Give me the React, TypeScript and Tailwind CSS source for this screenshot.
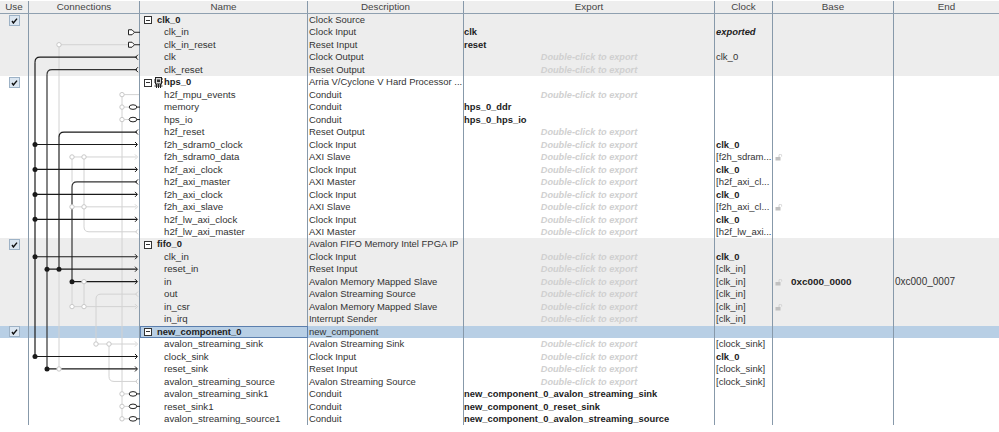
import React from "react";

type Row = {
  name: string;
  desc: string;
  kind?: "group" | "selected";
  bg?: "gray";
  exp?: string;
  dbl?: boolean;
  clock?: string;
  clockBold?: boolean;
  clockItalic?: boolean;
  lock?: boolean;
  base?: string;
  end?: string;
  icon?: boolean;
};

const rows: Row[] = [
  { name: "clk_0", desc: "Clock Source", kind: "group", bg: "gray" },
  { name: "clk_in", desc: "Clock Input", bg: "gray", exp: "clk", clock: "exported", clockBold: true, clockItalic: true },
  { name: "clk_in_reset", desc: "Reset Input", bg: "gray", exp: "reset" },
  { name: "clk", desc: "Clock Output", bg: "gray", dbl: true, clock: "clk_0" },
  { name: "clk_reset", desc: "Reset Output", bg: "gray", dbl: true },
  { name: "hps_0", desc: "Arria V/Cyclone V Hard Processor ...", kind: "group", icon: true },
  { name: "h2f_mpu_events", desc: "Conduit", dbl: true },
  { name: "memory", desc: "Conduit", exp: "hps_0_ddr" },
  { name: "hps_io", desc: "Conduit", exp: "hps_0_hps_io" },
  { name: "h2f_reset", desc: "Reset Output", dbl: true },
  { name: "f2h_sdram0_clock", desc: "Clock Input", dbl: true, clock: "clk_0", clockBold: true },
  { name: "f2h_sdram0_data", desc: "AXI Slave", dbl: true, clock: "[f2h_sdram...", lock: true },
  { name: "h2f_axi_clock", desc: "Clock Input", dbl: true, clock: "clk_0", clockBold: true },
  { name: "h2f_axi_master", desc: "AXI Master", dbl: true, clock: "[h2f_axi_cl..." },
  { name: "f2h_axi_clock", desc: "Clock Input", dbl: true, clock: "clk_0", clockBold: true },
  { name: "f2h_axi_slave", desc: "AXI Slave", dbl: true, clock: "[f2h_axi_cl...", lock: true },
  { name: "h2f_lw_axi_clock", desc: "Clock Input", dbl: true, clock: "clk_0", clockBold: true },
  { name: "h2f_lw_axi_master", desc: "AXI Master", dbl: true, clock: "[h2f_lw_axi..." },
  { name: "fifo_0", desc: "Avalon FIFO Memory Intel FPGA IP", kind: "group", bg: "gray" },
  { name: "clk_in", desc: "Clock Input", bg: "gray", dbl: true, clock: "clk_0", clockBold: true },
  { name: "reset_in", desc: "Reset Input", bg: "gray", dbl: true, clock: "[clk_in]" },
  { name: "in", desc: "Avalon Memory Mapped Slave", bg: "gray", dbl: true, clock: "[clk_in]", lock: true, base: "0xc000_0000", end: "0xc000_0007" },
  { name: "out", desc: "Avalon Streaming Source", bg: "gray", dbl: true, clock: "[clk_in]" },
  { name: "in_csr", desc: "Avalon Memory Mapped Slave", bg: "gray", dbl: true, clock: "[clk_in]", lock: true },
  { name: "in_irq", desc: "Interrupt Sender", bg: "gray", dbl: true, clock: "[clk_in]" },
  { name: "new_component_0", desc: "new_component", kind: "selected" },
  { name: "avalon_streaming_sink", desc: "Avalon Streaming Sink", dbl: true, clock: "[clock_sink]" },
  { name: "clock_sink", desc: "Clock Input", dbl: true, clock: "clk_0", clockBold: true },
  { name: "reset_sink", desc: "Reset Input", dbl: true, clock: "[clock_sink]" },
  { name: "avalon_streaming_source", desc: "Avalon Streaming Source", dbl: true, clock: "[clock_sink]" },
  { name: "avalon_streaming_sink1", desc: "Conduit", exp: "new_component_0_avalon_streaming_sink" },
  { name: "reset_sink1", desc: "Conduit", exp: "new_component_0_reset_sink" },
  { name: "avalon_streaming_source1", desc: "Conduit", exp: "new_component_0_avalon_streaming_source" },
];

const RH = 12.47;
const TOP = 5.8;
const y = (i: number) => TOP + RH * i;

const DARK = "#1a1a1a";
const MID = "#333";
const LIGHT = "#d2d2d2";

const width = (c: string) => (c === LIGHT ? 1 : 1.2);

const v = (x: number, a: number, b: number, c: string, k: string) => (
  <line key={k} x1={x} x2={x} y1={y(a)} y2={y(b)} stroke={c} strokeWidth={width(c)} />
);
const h = (x1: number, x2: number, i: number, c: string, k: string) => (
  <line key={k} x1={x1} x2={x2} y1={y(i)} y2={y(i)} stroke={c} strokeWidth={width(c)} />
);
// rounded corners where a wire leaves a row and turns down or up
const curveDown = (x: number, i: number, c: string, k: string) => (
  <path key={k} d={`M${x} ${y(i) + 5}Q${x} ${y(i)} ${x + 5} ${y(i)}H137`} fill="none" stroke={c} strokeWidth={width(c)} />
);
const curveUp = (x: number, i: number, c: string, k: string) => (
  <path key={k} d={`M${x} ${y(i) - 5}Q${x} ${y(i)} ${x + 5} ${y(i)}H137`} fill="none" stroke={c} strokeWidth={width(c)} />
);
const arrow = (i: number, c: string, k: string) => (
  <path key={k} d={`M135 ${y(i) - 2.5}L137.5 ${y(i)}L135 ${y(i) + 2.5}`} fill="none" stroke={c} />
);
const outArrow = (i: number, c: string, k: string) => (
  <path key={k} d={`M138 ${y(i) - 2.5}L135.5 ${y(i)}L138 ${y(i) + 2.5}`} fill="none" stroke={c} />
);
const dot = (x: number, i: number, k: string) => <circle key={k} cx={x} cy={y(i)} r={2.5} fill={DARK} />;
const ring = (x: number, i: number, k: string) => (
  <circle key={k} cx={x} cy={y(i)} r={2.2} fill="#fff" stroke="#c8c8c8" />
);
const conduit = (i: number, k: string) => (
  <g key={k}>
    {ring(122, i, k + "r")}
    <line x1={124} x2={129} y1={y(i)} y2={y(i)} stroke={LIGHT} />
    <ellipse cx={133} cy={y(i)} rx={3.8} ry={2.3} fill="#fff" stroke="#222" />
    <line x1={136.5} x2={140} y1={y(i)} y2={y(i)} stroke="#222" />
  </g>
);
const plug = (i: number, k: string) => (
  <g key={k}>
    <path d={`M128.5 ${y(i) - 2.5}H132L134.5 ${y(i)}L132 ${y(i) + 2.5}H128.5Z`} fill="#fff" stroke="#222" />
    <line x1={134.5} x2={140} y1={y(i)} y2={y(i)} stroke="#222" />
  </g>
);

const Wires = () => (
  <svg className="absolute left-[29px] top-[14px]" width="111" height="413" viewBox="29 0 111 413">
    {/* light wires go under the black ones */}
    {v(59, 2, 28, LIGHT, "l59")}
    {h(59, 128, 2, LIGHT, "l2")}
    {v(122, 6, 32, LIGHT, "l122")}
    {h(122, 139, 6, LIGHT, "mpuh")}
    {h(72, 136, 11, LIGHT, "l11")}
    {arrow(11, LIGHT, "a11")}
    {v(72, 11, 13, LIGHT, "l72a")}
    {v(84, 11, 16.6, LIGHT, "l84a")}
    {h(72, 136, 15, LIGHT, "l15")}
    {arrow(15, LIGHT, "a15")}
    {curveUp(84, 17, LIGHT, "c17")}
    {outArrow(17, LIGHT, "o17")}
    {v(84, 21, 23, LIGHT, "l84b")}
    {v(72, 21, 23, LIGHT, "l72b")}
    {h(72, 136, 23, LIGHT, "l23")}
    {arrow(23, LIGHT, "a23")}
    {curveDown(96, 22, LIGHT, "c22")}
    {outArrow(22, LIGHT, "o22")}
    {v(96, 22.4, 26, LIGHT, "l96")}
    {h(96, 136, 26, LIGHT, "l26")}
    {arrow(26, LIGHT, "a26")}
    {v(109, 26, 28.6, LIGHT, "l109")}
    {curveUp(109, 29, LIGHT, "c29")}
    {outArrow(29, LIGHT, "o29")}

    {/* clock and reset trunks */}
    {curveDown(35, 3, DARK, "c3")}
    {outArrow(3, DARK, "o3")}
    {v(35, 3.4, 27, DARK, "v35")}
    {curveDown(47, 4, MID, "c4")}
    {outArrow(4, DARK, "o4")}
    {v(47, 4.4, 28, MID, "v47")}
    {curveDown(59, 9, DARK, "c9")}
    {outArrow(9, DARK, "o9")}
    {v(59, 9.4, 20, MID, "v59")}
    {curveDown(72, 13, MID, "c13")}
    {outArrow(13, DARK, "o13")}
    {v(72, 13.4, 21, MID, "v72")}

    {[10, 12, 14, 16, 19, 27].map((i) => (
      <g key={"clk" + i}>
        {h(35, 137, i, DARK, "h")}
        {dot(35, i, "d")}
        {arrow(i, DARK, "a")}
      </g>
    ))}
    {h(47, 137, 20, DARK, "h20")}
    {dot(47, 20, "d20a")}
    {dot(59, 20, "d20b")}
    {arrow(20, DARK, "a20")}
    {h(72, 137, 21, DARK, "h21")}
    {dot(72, 21, "d21")}
    {arrow(21, DARK, "a21")}
    {h(47, 137, 28, DARK, "h28")}
    {dot(47, 28, "d28")}
    {arrow(28, DARK, "a28")}

    {/* open circles sit on top */}
    {ring(59, 2, "r2")}
    {ring(122, 6, "r6")}
    {ring(72, 11, "r11a")}
    {ring(84, 11, "r11b")}
    {ring(72, 15, "r15a")}
    {ring(84, 15, "r15b")}
    {ring(84, 21, "r21")}
    {ring(72, 23, "r23a")}
    {ring(84, 23, "r23b")}
    {ring(96, 26, "r26a")}
    {ring(109, 26, "r26b")}
    {ring(59, 28, "r28")}

    {[1, 2].map((i) => plug(i, "p" + i))}
    {[7, 8, 30, 31, 32].map((i) => conduit(i, "c" + i))}
  </svg>
);

const Check = () => (
  <span className="flex h-[11px] w-[11px] items-center justify-center border border-[#9db2c6] bg-[#dbe6f1]">
    <svg width="7" height="7" viewBox="0 0 7 7">
      <path d="M1 4L2.4 6L6 1.6" fill="none" stroke="#111" strokeWidth="1.4" />
    </svg>
  </span>
);

const Tree = () => (
  <span className="flex h-[8px] w-[8px] items-center justify-center border border-[#333] bg-white">
    <span className="h-px w-[4px] bg-[#333]" />
  </span>
);

const Lock = () => (
  <svg width="8" height="7" viewBox="0 0 8 7" className="block">
    <rect x="0.5" y="3" width="5" height="3.5" fill="#c0c0c0" />
    <path d="M4 3V1.5A1.3 1.3 0 0 1 6.6 1.5V2.5" fill="none" stroke="#d0d0d0" />
  </svg>
);

const Chip = () => (
  <svg width="9" height="11" viewBox="0 0 9 11" className="block">
    <rect x="1.5" y="0.5" width="6" height="6.5" fill="#d8d8d8" stroke="#222" />
    <rect x="3" y="2.5" width="3" height="2.5" fill="#333" />
    <path d="M0 3H1.5M0 5H1.5M7.5 2H9M7.5 5H9M0.5 9H8.5M2.5 7V11M4.5 7V11M6.5 7V11" stroke="#222" />
  </svg>
);

const cols = "grid grid-cols-[29px_111px_168px_156px_251px_58px_121px_105px]";
const cellLine = "border-r border-[#8799aa]";

export default function App() {
  return (
    <div className="relative h-[432px] w-[999px] overflow-hidden bg-white font-['Liberation_Sans',sans-serif] text-[9.6px] leading-[12.47px] text-[#333]">
      <div className={`${cols} h-[14px] border-t border-b border-t-white border-b-[#8fa0b0] bg-[#eeeeee] text-center text-[9.8px] text-[#444]`}>
        {["Use", "Connections", "Name", "Description", "Export", "Clock", "Base", "End"].map((t, i) => (
          <div key={t} className={`${i < 7 ? cellLine : ""} leading-[12px]`}>
            {t}
          </div>
        ))}
      </div>
      {rows.map((r, i) => {
        const bg = r.kind === "selected" ? "bg-[#b8cfe5]" : r.bg === "gray" ? "bg-[#ededed]" : "bg-white";
        const group = !!r.kind;
        return (
          <div key={i} className={`${cols} h-[12.47px] whitespace-nowrap ${bg}`}>
            <div className={`${cellLine} flex items-center justify-center`}>{group && <Check />}</div>
            <div className={cellLine} />
            <div
              className={`${cellLine} flex items-center ${
                group ? "text-[9.4px] font-bold text-[#222]" : "pl-[24px] text-[9.7px]"
              } ${r.kind === "selected" ? "outline outline-1 -outline-offset-1 outline-[#5b7fae]" : ""}`}
            >
              {group && (
                <span className="ml-[4px] mr-[5px]">
                  <Tree />
                </span>
              )}
              {r.icon && (
                <span className="-ml-[3px] mr-[1px]">
                  <Chip />
                </span>
              )}
              {r.name}
            </div>
            <div className={`${cellLine} pl-[1px] text-[9.45px]`}>{r.desc}</div>
            <div className={cellLine}>
              {r.exp && <span className="text-[9.4px] font-bold text-[#222]">{r.exp}</span>}
              {r.dbl && <div className="text-center text-[9.2px] font-bold italic text-[#d0d0d0]">Double-click to export</div>}
            </div>
            <div
              className={`${cellLine} pl-[1px] ${r.clockBold ? "text-[9.4px] font-bold text-[#222]" : "text-[9.5px]"} ${
                r.clockItalic ? "italic" : ""
              }`}
            >
              {r.clock}
            </div>
            <div className={`${cellLine} flex items-center pl-[2px]`}>
              <span className="w-[16px]">{r.lock && <Lock />}</span>
              {r.base && <span className="text-[9.9px] font-bold text-[#222]">{r.base}</span>}
            </div>
            <div className="pl-[1px] text-[10px]">{r.end}</div>
          </div>
        );
      })}
      <Wires />
    </div>
  );
}
